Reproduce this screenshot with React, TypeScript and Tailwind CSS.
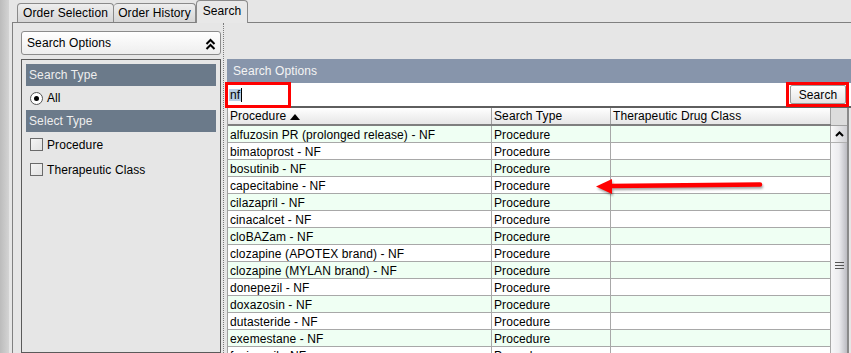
import React from 'react';

const rows = [
  'alfuzosin PR (prolonged release) - NF',
  'bimatoprost - NF',
  'bosutinib - NF',
  'capecitabine - NF',
  'cilazapril - NF',
  'cinacalcet - NF',
  'cloBAZam - NF',
  'clozapine (APOTEX brand) - NF',
  'clozapine (MYLAN brand) - NF',
  'donepezil - NF',
  'doxazosin - NF',
  'dutasteride - NF',
  'exemestane - NF',
  'fosinopril - NF',
];

const SectionBar: React.FC<{ label: string }> = ({ label }) => (
  <div className="h-[22px] bg-[#6b7a8a] text-[#eeeeee] flex items-center pl-[3px]">{label}</div>
);

const Checkbox: React.FC<{ label: string }> = ({ label }) => (
  <div className="h-[25px] flex items-center pl-[4px] gap-[4px]">
    <div className="w-[13px] h-[13px] border border-[#6a6a6a] bg-gradient-to-br from-[#f4f4f4] to-[#e2e2e2]" />
    <span>{label}</span>
  </div>
);

const App: React.FC = () => {
  return (
    <div
      className="w-[851px] h-[353px] overflow-hidden bg-[#e6e6e6] flex relative text-[12px] tracking-[0.1px] text-black leading-none"
      style={{ fontFamily: '"Liberation Sans", Arial, sans-serif' }}
    >
      <div className="w-[9px] shrink-0 bg-gradient-to-r from-[#bcbcbc] to-[#d4d4d4]" />

      <div className="flex-1 flex flex-col min-w-0">
        {/* tabs */}
        <div className="h-[22px] shrink-0 flex items-end pl-[8px]">
          <div className="h-[19px] w-[97px] flex items-center justify-center border border-b-0 border-[#8a8a8a] rounded-t-[4px] bg-gradient-to-b from-[#eeeeee] to-[#d6d6d6]">
            Order Selection
          </div>
          <div className="h-[19px] w-[82px] flex items-center justify-center border border-l-0 border-b-0 border-[#8a8a8a] rounded-t-[4px] bg-gradient-to-b from-[#eeeeee] to-[#d6d6d6]">
            Order History
          </div>
          <div className="h-[23px] w-[52px] -mb-px relative z-10 flex items-center justify-center border border-b-0 border-[#8a8a8a] rounded-t-[4px] bg-[#e8e8e8] pb-[2px]">
            Search
          </div>
        </div>

        {/* tab panel */}
        <div className="flex-1 ml-[3px] border-l border-t border-[#808080] flex min-h-0">
          {/* left column */}
          <div className="w-[208px] shrink-0 pl-[8px] pt-[8px] flex flex-col">
            <div className="h-[24px] border border-[#8c8c8c] rounded-[3px] bg-gradient-to-b from-[#ffffff] to-[#eeeeee] flex items-center justify-between pl-[5px] pr-[4px]">
              <span>Search Options</span>
              <svg width="11" height="12" viewBox="0 0 11 12" className="mt-[1px]">
                <polyline points="1.5,6 5.5,2 9.5,6" fill="none" stroke="#000" strokeWidth="2" />
                <polyline points="1.5,11 5.5,7 9.5,11" fill="none" stroke="#000" strokeWidth="2" />
              </svg>
            </div>
            <div className="mt-[4px] flex-1 border border-[#5a5a5a] px-[4px] pt-[4px]">
              <SectionBar label="Search Type" />
              <div className="h-[24px] flex items-center pl-[4px] gap-[4px]">
                <div className="w-[13px] h-[13px] rounded-full border border-[#555] bg-white flex items-center justify-center">
                  <div className="w-[5px] h-[5px] rounded-full bg-black" />
                </div>
                <span>All</span>
              </div>
              <SectionBar label="Select Type" />
              <Checkbox label="Procedure" />
              <Checkbox label="Therapeutic Class" />
            </div>
          </div>

          {/* divider */}
          <div className="ml-[2px] w-px border-l border-dotted border-[#7a7a7a]" />

          {/* right column */}
          <div className="ml-[2px] flex-1 pt-[36px] flex flex-col min-w-0">
            <div className="ml-[1px] h-[24px] bg-[#8795ab] text-[#f4f4f4] flex items-center pl-[6px]">
              Search Options
            </div>
            <div className="ml-[1px] h-[25px] bg-white border-b-2 border-[#5e5e5e] flex items-start justify-between">
              <div className="ml-[2px] mt-[4px] h-[15px] flex items-center">
                <span className="bg-[#b8cfe5] px-px">nf</span>
                <div className="w-px h-[14px] bg-black" />
              </div>
              <div className="mt-[2px] mr-[5px] w-[56px] h-[19px] border border-[#9a9a9a] rounded-[2px] bg-gradient-to-b from-[#ffffff] to-[#e4e4e4] flex items-center justify-center">
                Search
              </div>
            </div>

            <div className="flex flex-1 min-h-0">
              <div className="w-[604px] shrink-0 ml-[1px] border-l border-[#a0a0a0] flex flex-col">
                <div className="h-[18px] flex border-b-2 border-[#7e7e7e] bg-gradient-to-b from-[#ffffff] to-[#e6e6e6] shrink-0">
                  <div className="w-[264px] border-r border-[#a0a0a0] flex items-center pl-[2px] gap-[4px]">
                    <span>Procedure</span>
                    <svg width="10" height="7" viewBox="0 0 10 7">
                      <polygon points="0,7 5,1 10,7" fill="#000" />
                    </svg>
                  </div>
                  <div className="w-[119px] border-r border-[#a0a0a0] flex items-center pl-[2px]">Search Type</div>
                  <div className="w-[220px] border-r border-[#a0a0a0] flex items-center pl-[2px]">Therapeutic Drug Class</div>
                </div>
                {rows.map((r, i) => (
                  <div
                    key={r}
                    className={`h-[17px] shrink-0 flex border-b border-[#a8a8a8] ${i % 2 === 0 ? 'bg-[#effff3]' : 'bg-white'}`}
                  >
                    <div className="w-[264px] border-r border-[#a8a8a8] flex items-center pl-[2px] pt-px whitespace-nowrap">{r}</div>
                    <div className="w-[119px] border-r border-[#a8a8a8] flex items-center pl-[2px] pt-px">Procedure</div>
                    <div className="w-[220px] border-r border-[#a8a8a8]" />
                  </div>
                ))}
              </div>

              {/* scrollbar */}
              <div className="w-[16px] shrink-0 flex flex-col">
                <div className="h-[18px] bg-[#dcdcdc] border-b border-[#a0a0a0]" />
                <div className="h-[17px] bg-gradient-to-r from-[#fafafa] to-[#d0d0d4] border-b border-[#b0b0b0] flex items-center justify-center">
                  <svg width="9" height="6" viewBox="0 0 9 6">
                    <polyline points="1,5 4.5,1.5 8,5" fill="none" stroke="#000" strokeWidth="2" />
                  </svg>
                </div>
                <div className="flex-1 bg-gradient-to-r from-[#f6f6f8] via-[#ececef] to-[#bcbcc2] flex flex-col items-center pt-[119px] gap-[2px]">
                  <div className="w-[9px] h-px bg-[#555]" />
                  <div className="w-[9px] h-px bg-[#555]" />
                  <div className="w-[9px] h-px bg-[#555]" />
                </div>
              </div>
              <div className="w-[2px] shrink-0 bg-[#8a8a8a]" />
            </div>
          </div>
        </div>
      </div>

      {/* annotations */}
      <div className="absolute left-[225px] top-[82px] w-[66px] h-[26px] border-[3px] border-[#ff0000]" />
      <div className="absolute left-[786px] top-[82px] w-[63px] h-[25px] border-[3px] border-[#ff0000]" />
      <svg
        className="absolute left-[590px] top-[171px] drop-shadow-[1px_2px_1px_rgba(0,0,0,0.35)]"
        width="180"
        height="30"
        viewBox="0 0 180 30"
      >
        <line x1="20" y1="15" x2="170" y2="13.5" stroke="#ff0000" strokeWidth="4.5" strokeLinecap="round" />
        <polygon points="6,15.5 22,8 22,23" fill="#ff0000" />
      </svg>
    </div>
  );
};

export default App;
